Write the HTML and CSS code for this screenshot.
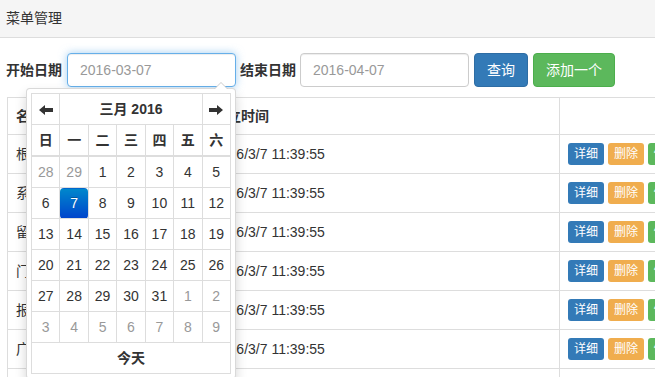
FILE: index.html
```html
<!DOCTYPE html>
<html lang="zh-CN">

<head>
    <meta charset="UTF-8">
    <meta name="viewport" content="width=device-width, initial-scale=1.0">
    <title>菜单管理</title>
    <link rel="stylesheet" href="styles.css">
</head>

<body>

    <div class="title-bar">菜单管理</div>

    <form class="search-form">
        <label for="start">开始日期</label>
        <span class="date-wrap">
            <input type="text" id="start" class="form-input focused" placeholder="2016-03-07">
            <div class="picker">
                <table class="cal">
                    <thead>
                        <tr>
                            <th class="nav">
                                <svg width="14" height="10" viewBox="0 0 14 10"><path d="M0 5 L6 0 V3 H14 V7 H6 V10 Z" fill="#333"/></svg>
                            </th>
                            <th class="month" colspan="5">三月 2016</th>
                            <th class="nav">
                                <svg width="14" height="10" viewBox="0 0 14 10"><path d="M14 5 L8 0 V3 H0 V7 H8 V10 Z" fill="#333"/></svg>
                            </th>
                        </tr>
                        <tr class="dow">
                            <th>日</th><th>一</th><th>二</th><th>三</th><th>四</th><th>五</th><th>六</th>
                        </tr>
                    </thead>
                    <tbody>
                        <tr><td class="old">28</td><td class="old">29</td><td>1</td><td>2</td><td>3</td><td>4</td><td>5</td></tr>
                        <tr><td>6</td><td class="active">7</td><td>8</td><td>9</td><td>10</td><td>11</td><td>12</td></tr>
                        <tr><td>13</td><td>14</td><td>15</td><td>16</td><td>17</td><td>18</td><td>19</td></tr>
                        <tr><td>20</td><td>21</td><td>22</td><td>23</td><td>24</td><td>25</td><td>26</td></tr>
                        <tr><td>27</td><td>28</td><td>29</td><td>30</td><td>31</td><td class="old">1</td><td class="old">2</td></tr>
                        <tr><td class="old">3</td><td class="old">4</td><td class="old">5</td><td class="old">6</td><td class="old">7</td><td class="old">8</td><td class="old">9</td></tr>
                        <tr><td class="today" colspan="7">今天</td></tr>
                    </tbody>
                </table>
            </div>
        </span>
        <label for="end" class="second">结束日期</label>
        <input type="text" id="end" class="form-input" placeholder="2016-04-07">
        <button type="submit" class="btn btn-primary">查询</button>
        <button type="button" class="btn btn-success">添加一个</button>
    </form>

    <table class="grid">
        <colgroup>
            <col style="width: 197px">
            <col style="width: 355px">
            <col>
        </colgroup>
        <thead>
            <tr>
                <th>名称</th>
                <th>建立时间</th>
                <th></th>
            </tr>
        </thead>
        <tbody>
            <tr>
                <td>根菜单</td>
                <td>2016/3/7 11:39:55</td>
                <td><button class="btn-xs btn-primary">详细</button> <button class="btn-xs btn-warning">删除</button> <button class="btn-xs btn-success">修改</button></td>
            </tr>
            <tr>
                <td>系统管理</td>
                <td>2016/3/7 11:39:55</td>
                <td><button class="btn-xs btn-primary">详细</button> <button class="btn-xs btn-warning">删除</button> <button class="btn-xs btn-success">修改</button></td>
            </tr>
            <tr>
                <td>留言管理</td>
                <td>2016/3/7 11:39:55</td>
                <td><button class="btn-xs btn-primary">详细</button> <button class="btn-xs btn-warning">删除</button> <button class="btn-xs btn-success">修改</button></td>
            </tr>
            <tr>
                <td>门户管理</td>
                <td>2016/3/7 11:39:55</td>
                <td><button class="btn-xs btn-primary">详细</button> <button class="btn-xs btn-warning">删除</button> <button class="btn-xs btn-success">修改</button></td>
            </tr>
            <tr>
                <td>报表管理</td>
                <td>2016/3/7 11:39:55</td>
                <td><button class="btn-xs btn-primary">详细</button> <button class="btn-xs btn-warning">删除</button> <button class="btn-xs btn-success">修改</button></td>
            </tr>
            <tr>
                <td>广告管理</td>
                <td>2016/3/7 11:39:55</td>
                <td><button class="btn-xs btn-primary">详细</button> <button class="btn-xs btn-warning">删除</button> <button class="btn-xs btn-success">修改</button></td>
            </tr>
            <tr>
                <td>用户管理</td>
                <td>2016/3/7 11:39:55</td>
                <td><button class="btn-xs btn-primary">详细</button> <button class="btn-xs btn-warning">删除</button> <button class="btn-xs btn-success">修改</button></td>
            </tr>
        </tbody>
    </table>

</body>

</html>
```

FILE: styles.css
```css
html, body {
    overflow: hidden;
}

body {
    font-family: "Liberation Sans", "Noto Sans CJK SC", sans-serif;
    font-size: 14px;
    line-height: 20px;
    color: #333;
    background-color: #fff;
    margin: 0;
}

.title-bar {
    height: 37px;
    line-height: 36px;
    padding: 0 6px;
    background-color: #f5f5f5;
    border-bottom: 1px solid #ddd;
}

.search-form {
    display: flex;
    align-items: center;
    padding: 15px 6px 10px;
}

.search-form label {
    font-weight: bold;
    margin-right: 5px;
}

.search-form label.second {
    margin-left: 4px;
    margin-right: 4px;
}

.date-wrap {
    position: relative;
    display: inline-block;
}

.form-input {
    box-sizing: border-box;
    width: 169px;
    height: 34px;
    padding: 6px 12px;
    font: inherit;
    color: #555;
    border: 1px solid #ccc;
    border-radius: 4px;
    box-shadow: inset 0 1px 1px rgba(0, 0, 0, .075);
    outline: none;
}

.form-input::placeholder {
    color: #999;
}

.form-input.focused {
    border-color: #66afe9;
    box-shadow: inset 0 1px 1px rgba(0, 0, 0, .075), 0 0 8px rgba(102, 175, 233, .6);
}

.btn {
    height: 34px;
    padding: 6px 12px;
    font: inherit;
    color: #fff;
    border: 1px solid transparent;
    border-radius: 4px;
    margin-left: 5px;
}

.btn-primary {
    background-color: #337ab7;
    border-color: #2e6da4;
}

.btn-success {
    background-color: #5cb85c;
    border-color: #4cae4c;
}

.btn-warning {
    background-color: #f0ad4e;
    border-color: #eea236;
}

/* date picker popup */
.picker {
    position: absolute;
    top: 35px;
    left: -41px;
    z-index: 10;
    padding: 4px;
    background-color: #fff;
    border: 1px solid rgba(0, 0, 0, .15);
    border-radius: 4px;
    box-shadow: 0 6px 12px rgba(0, 0, 0, .175);
}

.picker:before {
    content: "";
    position: absolute;
    top: -7px;
    right: 7px;
    border-left: 7px solid transparent;
    border-right: 7px solid transparent;
    border-bottom: 7px solid #ccc;
}

.picker:after {
    content: "";
    position: absolute;
    top: -6px;
    right: 8px;
    border-left: 6px solid transparent;
    border-right: 6px solid transparent;
    border-bottom: 6px solid #fff;
}

.cal {
    width: 200px;
    table-layout: fixed;
    border-collapse: collapse;
}

.cal th,
.cal td {
    height: 30px;
    padding: 0;
    line-height: 30px;
    text-align: center;
    border: 1px solid #ddd;
}

.cal th {
    font-weight: bold;
}

.cal .nav svg {
    vertical-align: middle;
}

.cal .dow th {
    border-bottom-width: 2px;
}

.cal td.old {
    color: #999;
}

.cal td.active {
    color: #fff;
    text-shadow: 0 -1px 0 rgba(0, 0, 0, .25);
    background-image: linear-gradient(to bottom, #08c, #04c);
    border-radius: 4px;
}

.cal td.today {
    font-weight: bold;
}

/* data table */
.grid {
    width: 800px;
    margin-left: 7px;
    table-layout: fixed;
    border-collapse: collapse;
}

.grid th,
.grid td {
    padding: 8px;
    text-align: left;
    vertical-align: middle;
    white-space: nowrap;
    border: 1px solid #ddd;
}

.grid th {
    height: 20px;
    font-weight: bold;
}

.grid td {
    height: 22px;
}

.btn-xs {
    padding: 1px 5px;
    font: inherit;
    font-size: 12px;
    line-height: 18px;
    color: #fff;
    border: 1px solid transparent;
    border-radius: 3px;
}
```
